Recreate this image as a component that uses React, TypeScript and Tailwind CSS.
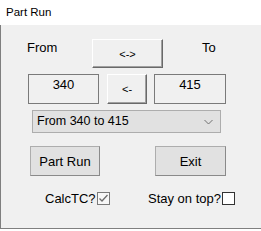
export default function App() {
    return (
        <div className="w-[261px] h-[231px] bg-white font-['Liberation_Sans',Arial,sans-serif] text-black overflow-hidden">
            {/* Title bar */}
            <div className="h-[25px] flex items-center pl-[6px] text-[11.5px] leading-none">Part Run</div>

            {/* Body */}
            <div className="h-[204px] bg-[#f0f0f0] border-l border-b border-[#7f7f7f] text-[13px] leading-[15px]">
                {/* Row 1 */}
                <div className="flex items-start pt-[14px] h-[43px]">
                    <div className="w-[91px] pl-[26px] pt-[1px]">From</div>
                    <button className="w-[71px] h-[29px] flex items-center justify-center pt-[1px] text-[11px] bg-[#f0f0f0] border border-t-white border-l-white border-r-[#696969] border-b-[#696969] shadow-[inset_-1px_-1px_0_#a0a0a0]">
                        &lt;-&gt;
                    </button>
                    <div className="pl-[39px] pt-[1px]">To</div>
                </div>

                {/* Row 2 */}
                <div className="flex mt-[6px] h-[30px]">
                    <div className="ml-[27px] w-[71px] h-[30px] border border-[#7a7a7a] text-center pt-[2px]">340</div>
                    <button className="ml-[8px] w-[40px] h-[30px] flex items-center justify-center pt-[1px] text-[11px] bg-[#f0f0f0] border border-t-white border-l-white border-r-[#696969] border-b-[#696969] shadow-[inset_-1px_-1px_0_#a0a0a0]">
                        &lt;-
                    </button>
                    <div className="ml-[7px] w-[72px] h-[30px] border border-[#7a7a7a] text-center pt-[2px]">415</div>
                </div>

                {/* Row 3 select */}
                <div className="mt-[6px] ml-[31px] w-[189px] h-[23px] bg-[#e1e1e1] border border-[#adadad] flex items-center justify-between pl-[4px] pr-[7px] text-[12.5px]">
                    <span>From 340 to 415</span>
                    <svg width="9" height="6" viewBox="0 0 9 6">
                        <path d="M0.5 1 L4.5 5 L8.5 1" fill="none" stroke="#707070" strokeWidth="1" />
                    </svg>
                </div>

                {/* Row 4 buttons */}
                <div className="flex mt-[13px] h-[30px]">
                    <button className="ml-[29px] w-[70px] h-[30px] bg-[#e1e1e1] border border-[#adadad] border-r-[#8a8a8a] border-b-[#8a8a8a] flex items-center justify-center">
                        Part Run
                    </button>
                    <button className="ml-[55px] w-[71px] h-[30px] bg-[#e1e1e1] border border-[#adadad] border-r-[#8a8a8a] border-b-[#8a8a8a] flex items-center justify-center">
                        Exit
                    </button>
                </div>

                {/* Row 5 checkboxes */}
                <div className="flex items-center mt-[16px] h-[13px]">
                    <div className="w-[146px] pl-[44px] flex items-center">
                        <span>CalcTC?</span>
                        <span className="ml-[1px] w-[13px] h-[13px] border border-[#7a7a7a] bg-[#f7f7f7] flex items-center justify-center">
                            <svg width="11" height="11" viewBox="0 0 11 11">
                                <path d="M1.5 5.5 L4 8 L9.5 2" fill="none" stroke="#6d6d6d" strokeWidth="1.3" />
                            </svg>
                        </span>
                    </div>
                    <div className="pl-[1px] flex items-center">
                        <span>Stay on top?</span>
                        <span className="ml-[1px] w-[13px] h-[13px] border border-[#333333] bg-white" />
                    </div>
                </div>
            </div>
        </div>
    )
}
